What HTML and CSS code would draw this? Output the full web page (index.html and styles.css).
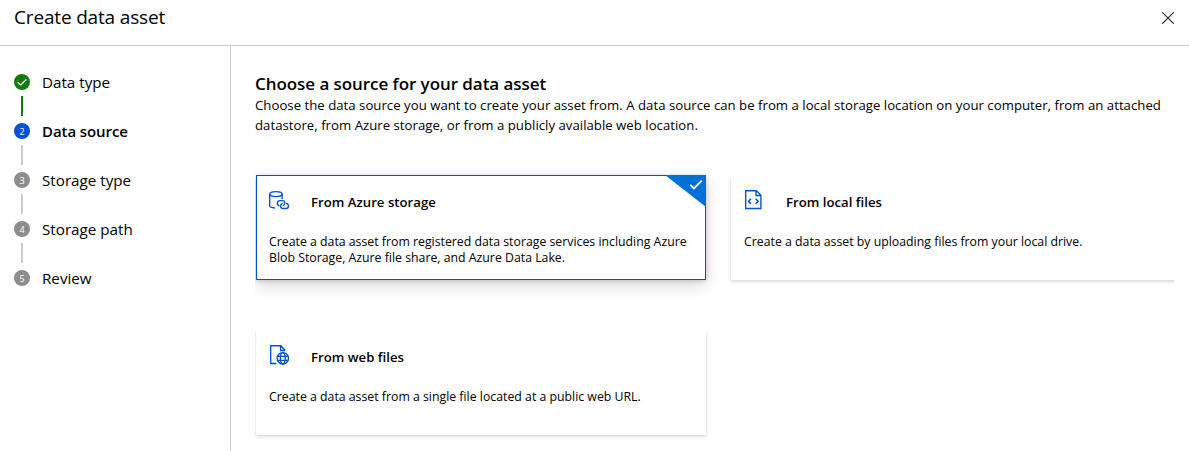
FILE: index.html
```
<!DOCTYPE html>
<html lang="en">
<head>
<meta charset="utf-8">
<title>Create data asset</title>
<link rel="stylesheet" href="styles.css">
</head>
<body>
<header class="header">
  <h1 class="title">Create data asset</h1>
  <button class="close" aria-label="Close">
    <svg width="12" height="12" viewBox="0 0 12 12"><path d="M.3.3l11.4 11.4M11.7.3L.3 11.7" fill="none" stroke="#222" stroke-width="1.1"/></svg>
  </button>
</header>
<div class="body">
  <nav class="steps">
    <div class="step done"><span class="dot"><svg width="16" height="16" viewBox="0 0 16 16"><path d="M3.6 8.2l3 2.7 5.8-5.4" fill="none" stroke="#fff" stroke-width="1.3"/></svg></span><span class="label">Data type</span></div>
    <div class="step current"><span class="dot">2</span><span class="label">Data source</span></div>
    <div class="step"><span class="dot">3</span><span class="label">Storage type</span></div>
    <div class="step"><span class="dot">4</span><span class="label">Storage path</span></div>
    <div class="step"><span class="dot">5</span><span class="label">Review</span></div>
  </nav>
  <main class="content">
    <h2 class="heading">Choose a source for your data asset</h2>
    <p class="intro">Choose the data source you want to create your asset from. A data source can be from a local storage location on your computer, from an attached<br>datastore, from Azure storage, or from a publicly available web location.</p>
    <div class="cards">
      <section class="card selected">
        <div class="card-head">
          <svg class="icon" width="22" height="22" viewBox="0 0 22 22" fill="none" stroke="#0050d8" stroke-width="1.35">
            <ellipse cx="6.9" cy="5.1" rx="6.2" ry="2.5"/>
            <path d="M.7 5.1v11.4c0 1.5 2.3 2.3 5.4 2.5M13.1 5.1v4.8"/>
            <path d="M10.6 16.9c-1.4-.2-2.3-1.3-2.3-2.6 0-1.5 1.2-2.7 2.7-2.7h2.2c1.5 0 2.6 1.2 2.6 2.6 0 1.2-.8 2.3-2 2.6"/>
            <path d="M17 14.4c1.4.2 2.4 1.2 2.4 2.5 0 1.5-1.1 2.6-2.6 2.6h-2.6c-1.5 0-2.6-1.1-2.6-2.6 0-1.2.8-2.3 2.1-2.6"/>
          </svg>
          <h3 class="card-title">From Azure storage</h3>
        </div>
        <p class="desc">Create a data asset from registered data storage services including Azure<br>Blob Storage, Azure file share, and Azure Data Lake.</p>
        <svg class="corner" width="41" height="32" viewBox="0 0 41 32"><path d="M0 0h41v32z" fill="#006fd6"/><path d="M25.3 9.8l3.6 3.7 7.8-7.8" fill="none" stroke="#fff" stroke-width="1.8"/></svg>
      </section>
      <section class="card">
        <div class="card-head">
          <svg class="icon" width="22" height="22" viewBox="0 0 22 22" fill="none" stroke="#0050d8" stroke-width="1.35">
            <path d="M1.7 1.7h10.6l4.6 4.6v13.2H1.7zM12 1.7v4.8h4.8"/>
            <path d="M7 9.7l-2.5 2.6L7 14.9M11.6 9.7l2.5 2.6-2.5 2.6" stroke-width="1.5"/>
          </svg>
          <h3 class="card-title">From local files</h3>
        </div>
        <p class="desc">Create a data asset by uploading files from your local drive.</p>
      </section>
      <section class="card">
        <div class="card-head">
          <svg class="icon" width="22" height="22" viewBox="0 0 22 22" fill="none" stroke="#0050d8" stroke-width="1.35">
            <path d="M7.3 19.5H1.7V1.7h10.1l4.4 4.6M11.6 1.7v4.8h4.6"/>
            <circle cx="13.8" cy="14.3" r="5.7"/><ellipse cx="13.8" cy="14.3" rx="2.4" ry="5.7"/><path d="M8.4 12.4h10.8M8.4 16.3h10.8"/>
          </svg>
          <h3 class="card-title">From web files</h3>
        </div>
        <p class="desc">Create a data asset from a single file located at a public web URL.</p>
      </section>
    </div>
  </main>
</div>
</body>
</html>
```
FILE: styles.css
```
* { box-sizing: border-box; }
body { margin: 0; height: 451px; overflow: hidden; background: #fff; color: #000; font-family: "Open Sans", "Noto Sans", sans-serif; display: flex; flex-direction: column; }
h1, h2, h3, p { margin: 0; white-space: nowrap; }
.header { height: 46px; flex: none; border-bottom: 1px solid #d0d0d0; display: flex; justify-content: space-between; align-items: flex-start; padding: 4px 15px 0 14px; }
.title { font-size: 19px; line-height: 26px; font-weight: 400; letter-spacing: -.17px; }
.close { border: 0; padding: 0; margin-top: 8px; background: none; line-height: 0; }
.body { flex: 1; display: flex; min-height: 0; }
.steps { width: 231px; flex: none; border-right: 1px solid #d0d0d0; padding: 25px 0 0 14px; }
.step { height: 49px; position: relative; display: flex; gap: 12px; align-items: flex-start; }
.dot { width: 16px; height: 16px; margin-top: 3px; border-radius: 50%; background: #8d8d8d; color: #fff; font-size: 9px; line-height: 17px; text-align: center; }
.dot svg { display: block; }
.step:not(:last-child)::after { content: ""; position: absolute; left: 7px; top: 25px; width: 2px; height: 20px; background: #ccc; }
.step.done::after { background: #107c10; }
.done .dot { background: #107c10; }
.current .dot { background: #0050d8; }
.label { font-size: 15.2px; line-height: 22px; white-space: nowrap; }
.current .label { font-size: 15px; font-weight: 600; letter-spacing: -.08px; }
.content { flex: 1; min-width: 0; padding: 26px 15px 0 24px; display: flex; flex-direction: column; }
.heading { font-size: 17px; line-height: 23px; font-weight: 600; letter-spacing: -.06px; }
.intro { font-size: 13.2px; line-height: 20px; letter-spacing: .016px; }
.cards { flex: 1; min-height: 0; overflow: hidden; display: grid; grid-template-columns: 450px 450px; grid-auto-rows: 105px; gap: 50px 25px; padding: 40px 0 0 1px; }
.card { position: relative; background: #fff; padding: 14px 13px; box-shadow: 0 1.6px 3.6px rgba(0,0,0,.18), 0 .3px .9px rgba(0,0,0,.11); }
.card.selected { padding: 13px 12px; border: 1px solid #0050d8; box-shadow: 0 6.4px 14.4px rgba(0,0,0,.14), 0 1.2px 5px rgba(0,0,0,.2); }
.card-head { display: flex; gap: 20px; height: 45px; }
.card-title { font-size: 13.2px; line-height: 26px; font-weight: 600; }
.desc { font-size: 12.3px; line-height: 16px; }
.corner { position: absolute; right: -1px; top: -1px; }
```
